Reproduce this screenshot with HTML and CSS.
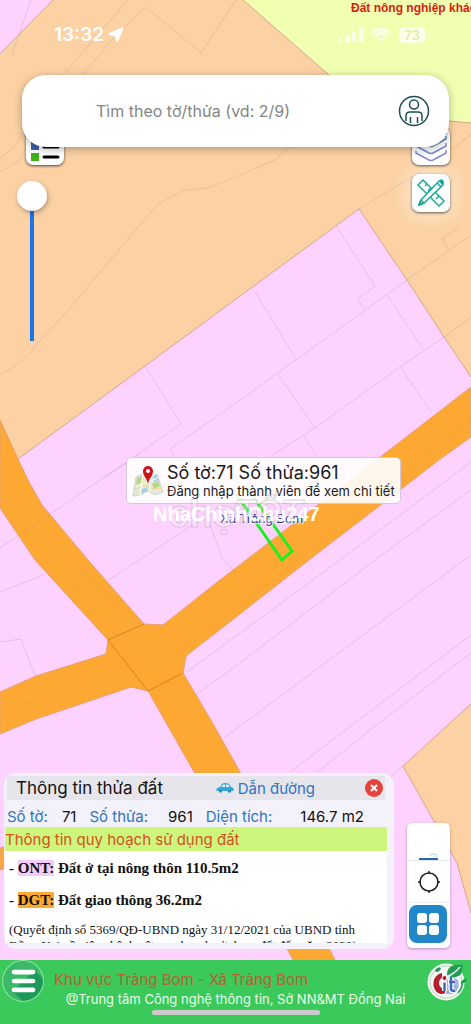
FILE: index.html
```html
<!DOCTYPE html>
<html lang="vi">
<head>
    <meta charset="UTF-8">
    <meta name="viewport" content="width=device-width, initial-scale=1.0">
    <title>Thông tin quy hoạch</title>
    <link rel="stylesheet" href="styles.css">
</head>
<body>
    <main class="map">
        <svg class="map-canvas" viewBox="0 0 471 960" preserveAspectRatio="xMidYMin slice" aria-hidden="true">
            <!-- land zones -->
            <rect class="zone-ont" width="471" height="960"/>
            <path class="zone-farm" d="M53 0 L0 54 V422 L18 459 L145 366 L236 299 L359 209 L407 280 L444 337 L471 377 V0 Z"/>
            <path class="zone-other" d="M243 0 L328 74 L370 109 L449 121 L471 123 V0 Z"/>
            <path class="zone-farm" d="M471 704 L403 766 L435 823 L457 863 L471 913 Z"/>

            <!-- roads -->
            <path class="road" d="M0 420 L18 459 L28 480 L42 505 L88 560 L144 624 L163 625 L220 580 L383 455 L471 387 V437 L439 460 L309 560 L236 617 L186 656 L183 673 L212 722 L240 772 L335 960 H293 L193 770 L148 691 L131 687 L36 719 L0 734 V692 L36 676 L106 654 L108 640 L35 560 L0 508 Z"/>
            <path class="road" d="M0 848 L30 838 V860 L0 870 Z"/>
            <path class="road-joint" d="M108 640 L144 624 M108 640 L148 691 M148 691 L183 673"/>
            <path class="road-line" d="M68 582 L120 640 M80 570 L136 628 M170 660 L236 610 L471 420 M20 706 L60 690"/>

            <!-- plot borders -->
            <path class="plot" d="M145 366 L181 424 L105 477 L0 548 M105 477 L140 454 M170 449 L236 403 L407 280 M170 449 L178 462 M255 292 L296 359 M336 226 L375 286 L357 299 L365 309 M387 295 L423 349 M236 478 L315 428 L400 367 L444 337 M278 374 L315 428 M400 367 L432 413 M304 437 L318 458"/>
            <path class="plot" d="M110 579 L200 520 M0 592 L44 575 M0 642 L21 639 L35 676 M223 560 L236 573 M210 525 L223 560"/>
            <path class="plot" d="M187 672 L340 560 L471 462 M197 694 L236 666 L375 560 L471 490 M224 738 L471 555 M318 772 L366 733 L471 653 M290 772 L471 635 M391 777 L403 766"/>
            <path class="plot" d="M12 54 L31 0 M63 75 L128 0 M82 75 L120 31 L146 7 L201 53 L236 0 M0 172 L20 160 L32 135 M0 158 L14 148 L26 128 M0 375 Q25 362 38 343 L70 308 L144 220 M144 220 L158 204 L185 190 L208 188 L236 177 M236 177 L275 160 L290 147 M407 280 L471 235 M444 337 L471 317 M448 249 L442 238 L459 228 M359 209 L420 172 L471 135"/>

            <path class="zone-edge" d="M53 0 L0 54 M18 459 L145 366 L236 299 L359 209 L407 280 L444 337 L471 377 M243 0 L328 74 L370 109 L449 121 L471 123 M471 704 L403 766 L435 823 L457 863 L471 913"/>
            <path class="parcel" d="M282 560 L292 551 L247 488 L237 495 Z"/>
        </svg>

        <span class="map-label label-farm">Đất nông nghiệp khác</span>
        <span class="map-label label-commune">Xã Trảng Bom</span>
        <span class="map-label label-mark">chợ</span>
        <span class="map-label label-mark label-mark-top">TỐT</span>
        <span class="map-label label-site">NhaChinhChu247</span>

        <div class="popup">
            <svg class="popup-icon" viewBox="0 0 32 32" aria-hidden="true">
                <path fill="#e3ead8" stroke="#b9c0b8" stroke-width=".6" d="M4 12 L11 9 L17 12 L25 9 L31 27 L23 30 L16 26 L8 30 L1 31 Z"/>
                <path fill="#b7d68a" d="M5 13 L10 11 L9 18 L4 20 Z M20 19 L26 16 L28 21 L22 24 Z"/>
                <path fill="#a9cfe6" d="M22 11 L25 10 L27 15 L21 17 Z M10 24 L15 22 L16 26 L9 29 Z"/>
                <path fill="none" stroke="#efd98a" stroke-width="1.2" d="M3 25 L12 19 L20 24 L29 23 M11 10 L10 20"/>
                <path fill="none" stroke="#fff" d="M11 9 L8 30 M17 12 L18 27 M4 22 L26 13"/>
                <path fill="#d0141c" d="M16 19 C15 13 11 11 11 6 A5 5 0 0 1 21 6 C21 11 17 13 16 19 Z"/>
                <circle fill="#fff" cx="16" cy="6" r="2"/>
            </svg>
            <div>
                <h2 class="popup-title">Số tờ:71 Số thửa:961</h2>
                <p class="popup-text">Đăng nhập thành viên để xem chi tiết</p>
            </div>
        </div>

        <div class="status-bar">
            <span class="clock">13:32</span>
            <svg class="icon-location" viewBox="0 0 16 16" aria-hidden="true"><path d="M14.500 1.500 L9 14 L7.500 8.500 L1.500 7 Z"/></svg>
            <div class="status-icons">
                <svg class="icon-signal" viewBox="0 0 24 16" aria-hidden="true"><path d="M0 12h4v3H0z M7 9h4v6H7z M13 5h4v10h-4z M20 1h4v14h-4z"/></svg>
                <svg class="icon-wifi" viewBox="0 0 20 16" aria-hidden="true"><path d="M10 15 L7 12 Q10 9.500 13 12 Z M3 8 Q10 2 17 8 L15 10 Q10 6 5 10 Z M0 5 Q10 -3 20 5 L18 7 Q10 0 2 7 Z"/></svg>
                <span class="battery">73</span>
            </div>
        </div>

        <form class="search">
            <input class="search-input" type="text" aria-label="Tìm theo tờ/thửa" placeholder="Tìm theo tờ/thửa (vd: 2/9)">
            <button class="account" type="button" aria-label="Tài khoản">
                <svg viewBox="0 0 32 32" aria-hidden="true">
                    <circle cx="16" cy="16" r="14.500"/>
                    <circle cx="16" cy="9.500" r="4.500"/>
                    <path d="M8 26 V21 Q8 17 12 17 H20 Q24 17 24 21 V26 M12.500 22 V28 M19.500 22 V28"/>
                </svg>
            </button>
        </form>

        <div class="controls">
            <div class="control-column">
                <button class="tool" type="button" aria-label="Chú giải">
                    <svg viewBox="0 0 38 38" aria-hidden="true">
                        <path fill="#e03a2f" d="M5 5h8v7H5z"/>
                        <path fill="#3d5fb0" d="M5 15h8v8H5z"/>
                        <path fill="#3fb016" d="M5 26h8v8H5z"/>
                        <path stroke="#000" stroke-width="3" stroke-linecap="round" d="M18 9H32 M18 20H32 M18 30H32"/>
                    </svg>
                </button>
                <input class="opacity-slider" type="range" min="0" max="100" value="100" aria-label="Độ mờ lớp bản đồ">
            </div>
            <div class="control-column">
                <button class="tool" type="button" aria-label="Lớp bản đồ">
                    <svg class="icon-layers" viewBox="0 0 38 38" aria-hidden="true">
                        <path stroke="#4b9a94" d="M4 7 L19 0 L34 7 L19 15 Z"/>
                        <path stroke="#5f93b8" d="M4 10 V12 L17 19 Q19 20 21 19 L34 12 V9"/>
                        <path stroke="#7388d0" d="M4 17 V19 L17 26 Q19 27 21 26 L34 19 V16"/>
                        <path stroke="#8583d6" d="M4 24 V26 L17 33 Q19 34 21 33 L34 26 V23"/>
                    </svg>
                </button>
                <button class="tool tool-glow" type="button" aria-label="Đo đạc">
                    <svg class="icon-measure" viewBox="0 0 38 38" aria-hidden="true">
                        <path d="M11 6 L32 27 L27 32 L6 11 Z M15 10 L13 12 M19 14 L16 17 M23 18 L21 20 M27 22 L24 25"/>
                        <path fill="#fff" d="M27 7 Q30 5 31 8 L31 11 L12 29 L7 31 L9 26 Z"/>
                        <path d="M25 9 L29 13 M9 26 L12 29"/>
                        <path fill="#18a998" d="M28 7 Q30 5 31 8 L30 10 Z M7 31 L8 28 L10 30 Z"/>
                    </svg>
                </button>
            </div>
        </div>

        <div class="bottom">
            <section class="panel">
                <header class="panel-header">
                    <h1 class="panel-title">Thông tin thửa đất</h1>
                    <a class="directions" href="#">
                        <svg class="icon-car" viewBox="0 0 18 12" aria-hidden="true">
                            <path fill="#35a8d8" d="M1 6 L4 5 L6 2 Q7 1 9 1 Q12 1 13 2 L15 5 Q17 5 17.500 7 V9 H0.500 Q0 7 1 6 Z"/>
                            <path fill="#e9f4fa" d="M5.500 5 L7 2.500 H9 V5 Z M10 2.500 H12 L13.500 5 H10 Z"/>
                            <circle fill="#2b93c4" cx="4.500" cy="9" r="1.800"/>
                            <circle fill="#2b93c4" cx="13.500" cy="9" r="1.800"/>
                        </svg>
                        Dẫn đường
                    </a>
                    <button class="close" type="button" aria-label="Đóng">
                        <svg viewBox="0 0 18 18" aria-hidden="true"><path d="M6 6 L12 12 M12 6 L6 12"/></svg>
                    </button>
                </header>
                <dl class="facts">
                    <div class="fact"><dt>Số tờ:</dt><dd>71</dd></div>
                    <div class="fact"><dt>Số thửa:</dt><dd>961</dd></div>
                    <div class="fact"><dt>Diện tích:</dt><dd>146.7 m2</dd></div>
                </dl>
                <div class="planning">
                    <h2 class="planning-title">Thông tin quy hoạch sử dụng đất</h2>
                    <div class="planning-body">
                        <p class="land">- <mark class="code-ont">ONT:</mark> Đất ở tại nông thôn 110.5m2</p>
                        <p class="land">- <mark class="code-dgt">DGT:</mark> Đất giao thông 36.2m2</p>
                        <p class="decision">(Quyết định số 5369/QĐ-UBND ngày 31/12/2021 của UBND tỉnh Đồng Nai về việc phê duyệt quy hoạch sử dụng đất đến năm 2030)</p>
                    </div>
                </div>
            </section>

            <nav class="toolbox">
                <button class="toolbox-item toolbox-view" type="button" aria-label="Góc nhìn">
                    <svg viewBox="0 0 20 8" aria-hidden="true">
                        <path fill="none" stroke="#9fd3e8" d="M11 4 Q12 1 15 2 Q18 1 17 5"/>
                        <path fill="#2b62ae" d="M0 6h19v2H0z"/>
                    </svg>
                </button>
                <button class="toolbox-item toolbox-locate" type="button" aria-label="Vị trí của tôi">
                    <svg viewBox="0 0 24 24" aria-hidden="true"><circle cx="12" cy="12" r="9"/><path d="M12 1V4 M12 20V23 M1 12H4 M20 12H23"/></svg>
                </button>
                <button class="toolbox-item toolbox-apps" type="button" aria-label="Ứng dụng">
                    <svg viewBox="0 0 38 38" aria-hidden="true">
                        <rect x="8" y="8" width="10" height="10" rx="3"/><rect x="20" y="8" width="10" height="10" rx="3"/>
                        <rect x="8" y="20" width="10" height="10" rx="3"/><rect x="20" y="20" width="10" height="10" rx="3"/>
                    </svg>
                </button>
            </nav>
        </div>
    </main>

    <footer class="footer">
        <button class="menu" type="button" aria-label="Menu">
            <svg viewBox="0 0 40 40" aria-hidden="true">
                <circle cx="20" cy="20" r="19.500" fill="#3cb968" stroke="#8fe5a4"/>
                <path fill="#1c9a5b" d="M31 10 L39 18 A19.500 19.500 0 0 1 20 39 L10 30 Z"/>
                <path stroke="#fff" stroke-width="4.500" stroke-linecap="round" d="M11.500 11.500H29.500 M11.500 20H29.500 M11.500 28.500H29.500"/>
            </svg>
        </button>
        <div class="footer-text">
            <p class="area">Khu vực Trảng Bom - Xã Trảng Bom</p>
            <p class="owner">@Trung tâm Công nghệ thông tin, Sở NN&amp;MT Đồng Nai</p>
            <div class="home-indicator"></div>
        </div>
        <svg class="logo" viewBox="0 0 42 40" aria-hidden="true">
            <circle cx="19" cy="20" r="18.500" fill="#f4f8f4"/>
            <circle cx="19" cy="20" r="16" fill="none" stroke="#8db5a0" stroke-dasharray="1.500 1"/>
            <path fill="#b51e2e" d="M15 11 C5 13 4 26 11 31 Q15 33 18 31 V26 Q13 27 12 22 Q12 17 15 16 Z"/>
            <path fill="#9db4e4" d="M23 13 L31 18 Q34 27 26 32 H19 V20 Z"/>
            <circle fill="#b51e2e" stroke="#fff" cx="17.500" cy="16" r="2.500"/>
            <path fill="none" stroke="#fff" stroke-width="5" d="M17.500 20V29 M24 14V27Q24 29 28 29 M21 20H28"/>
            <path fill="none" stroke="#4467b5" stroke-width="2.500" d="M17.500 20.500V29 M24 15V27Q24 29 28 29 M22 20H28"/>
            <path fill="#239b55" d="M20 13 C20 4 26 2 36 3 C34 7 37 13 29 15 Q24 16 20 13 Z M8 9 Q10 4 14 6 Q13 10 9 10 Z"/>
            <path fill="none" stroke="#e8f6ea" stroke-width="1.500" d="M21 14 Q27 12 33 5"/>
            <path fill="none" stroke="#239b55" stroke-width="1.500" d="M31 31 Q36 26 35 19"/>
            <path fill="#239b55" d="M34 21 Q36 16 40 17 Q39 21 34 22 Z"/>
        </svg>
    </footer>
</body>
</html>
```
FILE: styles.css
```css
* {
    margin: 0;
    padding: 0;
    box-sizing: border-box;
}

body {
    font-family: Inter, 'Open Sans', sans-serif;
    min-height: 100vh;
    display: flex;
    flex-direction: column;
    color: #111;
}

button {
    border: none;
    background: none;
    cursor: pointer;
}

svg {
    display: block;
}

/* Map */
.map {
    position: relative;
    flex: 1;
    display: flex;
    flex-direction: column;
    overflow: hidden;
    background: #fdd2ff;
}

.map-canvas {
    position: absolute;
    inset: 0;
    width: 100%;
    height: 100%;
}

.zone-ont {
    fill: #fdd2ff;
}

.zone-farm {
    fill: #fcd2a4;
}

.zone-other {
    fill: #f1ffb0;
}

.zone-edge {
    fill: none;
    stroke: #d9a58f;
}

.road {
    fill: #fca832;
    stroke: #e8a070;
}

.road-joint {
    fill: none;
    stroke: #dd7f22;
}

.road-line {
    fill: none;
    stroke: #f0a03c;
}

.plot {
    fill: none;
    stroke: #b08090;
    stroke-opacity: 0.25;
}

.parcel {
    fill: none;
    stroke: #1ef01e;
    stroke-width: 3;
}

.map-label {
    position: absolute;
    font-family: 'Liberation Sans', Arial, sans-serif;
    font-weight: bold;
    white-space: nowrap;
}

.label-farm {
    left: 351px;
    top: 1px;
    font-size: 12px;
    line-height: 14px;
    color: #d81e12;
}

.label-commune {
    left: 220px;
    top: 511px;
    font-size: 13px;
    line-height: 16px;
    font-weight: normal;
    color: #2b2f9c;
    text-shadow: 0 0 2px #fff, 0 0 2px #fff, 1px 1px 1px #fff, -1px -1px 1px #fff;
}

.label-site {
    left: 153px;
    top: 502px;
    font-size: 20px;
    line-height: 24px;
    color: #fff;
    z-index: 2;
}

.label-mark {
    left: 168px;
    top: 493px;
    font-size: 38px;
    line-height: 42px;
    color: rgba(255, 255, 255, 0.3);
    -webkit-text-stroke: 1px rgba(170, 150, 170, 0.4);
    z-index: 1;
}

.label-mark-top {
    left: 234px;
    top: 491px;
    font-size: 34px;
    line-height: 40px;
    font-style: italic;
}

.popup {
    position: absolute;
    left: 126px;
    top: 457px;
    display: flex;
    align-items: center;
    gap: 3px;
    padding: 4px 5px;
    background: rgba(255, 255, 255, 0.9);
    border: 1px solid #d8c8d8;
    border-radius: 5px;
    white-space: nowrap;
    color: #1a1a1a;
}

.popup-icon {
    width: 32px;
    height: 32px;
}

.popup-title {
    font-size: 18px;
    line-height: 21px;
    font-weight: normal;
}

.popup-text {
    font-size: 13px;
    line-height: 16px;
}

/* Phone status bar */
.status-bar {
    position: relative;
    display: flex;
    align-items: center;
    gap: 4px;
    height: 75px;
    padding: 0 46px 6px 54px;
    color: #fff;
}

.clock {
    font-size: 19px;
    font-weight: 600;
}

.icon-location {
    width: 16px;
    height: 16px;
    fill: #fff;
    stroke: #fff;
    stroke-width: 2;
    stroke-linejoin: round;
}

.status-icons {
    display: flex;
    align-items: center;
    gap: 8px;
    margin-left: auto;
    opacity: 0.75;
}

.icon-signal {
    width: 24px;
    height: 16px;
    fill: #fff;
}

.icon-wifi {
    width: 20px;
    height: 16px;
    fill: #fff;
}

.battery {
    padding: 0 5px;
    border-radius: 5px;
    background: #fff;
    font-size: 13px;
    line-height: 16px;
    font-weight: 600;
    color: #dfe8a8;
}

/* Search */
.search {
    position: relative;
    z-index: 1;
    display: flex;
    align-items: center;
    height: 72px;
    margin: 0 22px;
    padding: 0 19px 0 74px;
    border-radius: 24px;
    background: #fff;
    box-shadow: 0 2px 8px rgba(0, 0, 0, 0.3);
}

.search-input {
    flex: 1;
    min-width: 0;
    border: none;
    outline: none;
    font: 16px Inter, 'Open Sans', sans-serif;
}

.search-input::placeholder {
    color: #858585;
}

.account svg {
    width: 32px;
    height: 32px;
    fill: none;
    stroke: #1e4d4f;
    stroke-width: 1.5;
}

/* Buttons over the map */
.controls {
    position: relative;
    display: flex;
    justify-content: space-between;
    margin-top: -20px;
    padding: 0 21px 0 26px;
}

.control-column {
    display: flex;
    flex-direction: column;
    align-items: flex-start;
    gap: 9px;
}

.tool {
    width: 38px;
    height: 38px;
    border-radius: 7px;
    background: #fff;
    box-shadow: 0 1px 3px rgba(0, 0, 0, 0.7);
}

.tool-glow {
    box-shadow: 0 1px 3px rgba(0, 0, 0, 0.6), 0 0 16px 6px rgba(255, 255, 255, 0.4);
}

.tool svg {
    width: 100%;
    height: 100%;
}

.icon-layers {
    fill: none;
    stroke-width: 1.5;
}

.icon-measure {
    fill: none;
    stroke: #18a998;
    stroke-width: 1.5;
}

.opacity-slider {
    appearance: none;
    writing-mode: vertical-lr;
    direction: rtl;
    width: 30px;
    height: 160px;
    margin: 7px 0 0 -9px;
    background: linear-gradient(#1a73e8, #1a73e8) center / 4px 100% no-repeat;
}

.opacity-slider::-webkit-slider-thumb {
    appearance: none;
    width: 30px;
    height: 30px;
    border-radius: 50%;
    background: #fff;
    box-shadow: 1px 2px 5px rgba(0, 0, 0, 0.3);
}

/* Parcel panel */
.bottom {
    position: relative;
    display: flex;
    align-items: flex-end;
    justify-content: space-between;
    gap: 12px;
    margin-top: auto;
    padding: 0 21px 11px 4px;
}

.panel {
    flex: 0 1 390px;
    min-width: 0;
    padding: 3px 7px 6px 1px;
    border-radius: 12px;
    background: #f3f1fa;
}

.panel-header {
    display: flex;
    align-items: center;
    height: 24px;
    margin: 0 2px;
    padding: 0 2px 0 9px;
    background: #e6e5ec;
}

.panel-title {
    flex: 1;
    font-size: 17px;
    font-weight: normal;
}

.directions {
    display: flex;
    align-items: center;
    gap: 4px;
    margin-right: 50px;
    font-size: 15px;
    color: #2f74c0;
    text-decoration: none;
}

.icon-car {
    width: 18px;
    height: 12px;
}

.close {
    width: 18px;
    height: 18px;
    border-radius: 50%;
    background: #e5433d;
}

.close svg {
    stroke: #fff;
    stroke-width: 2;
}

.facts {
    display: flex;
    justify-content: space-between;
    padding: 6px 23px 0 2px;
    font-size: 15px;
    line-height: 21px;
}

.fact {
    display: flex;
    gap: 14px;
}

.fact:nth-child(2) {
    gap: 20px;
}

.fact:nth-child(3) {
    gap: 28px;
}

.fact dt {
    color: #2f74c0;
}

.planning-title {
    padding-top: 2px;
    font-size: 15px;
    line-height: 22px;
    font-weight: normal;
    color: #d5501f;
    background: #ccf67c;
}

.planning-body {
    height: 92px;
    padding: 7px 4px 0;
    overflow: hidden;
    background: #fff;
    font-family: 'Liberation Serif', 'Times New Roman', serif;
}

.land {
    margin-bottom: 12px;
    font-size: 15px;
    line-height: 20px;
    font-weight: bold;
}

.land mark {
    color: inherit;
}

.land .code-ont {
    background: #f3ccfa;
}

.land .code-dgt {
    background: #fca832;
}

.decision {
    font-size: 13px;
    line-height: 16px;
}

/* Map tools */
.toolbox {
    flex: none;
    width: 43px;
    margin-bottom: 1px;
    border-radius: 5px;
    background: #fff;
    box-shadow: 0 1px 3px rgba(0, 0, 0, 0.3);
}

.toolbox-item {
    display: flex;
    justify-content: center;
    align-items: center;
    width: 100%;
}

.toolbox-view {
    height: 38px;
    align-items: flex-end;
    border-bottom: 1px solid #e3e6ea;
}

.toolbox-view svg {
    width: 20px;
    height: 8px;
}

.toolbox-locate {
    height: 42px;
    border-bottom: 1px solid #eee;
}

.toolbox-locate svg {
    width: 24px;
    height: 24px;
    fill: none;
    stroke: #222;
    stroke-width: 1.5;
}

.toolbox-apps {
    width: 38px;
    height: 38px;
    margin: 2px 2px 5px;
    border-radius: 8px;
    background: #2287c8;
}

.toolbox-apps svg {
    width: 38px;
    height: 38px;
    fill: #fff;
}

/* Footer */
.footer {
    display: grid;
    grid-template-columns: 42px 1fr 42px;
    height: 64px;
    padding: 0 2px;
    background: #3cc95c;
}

.menu {
    width: 42px;
    height: 42px;
}

.menu svg {
    width: 42px;
    height: 42px;
}

.footer-text {
    padding-top: 10px;
}

.area {
    padding-left: 10px;
    font-size: 15px;
    line-height: 20px;
    color: #b3632f;
}

.owner {
    font-size: 13px;
    line-height: 18px;
    text-align: center;
    color: #e9fbe9;
}

.home-indicator {
    width: 168px;
    height: 5px;
    margin: 2px auto 0;
    border-radius: 3px;
    background: #cbcbcb;
}

.logo {
    width: 42px;
    height: 40px;
    margin-top: 2px;
}
```
